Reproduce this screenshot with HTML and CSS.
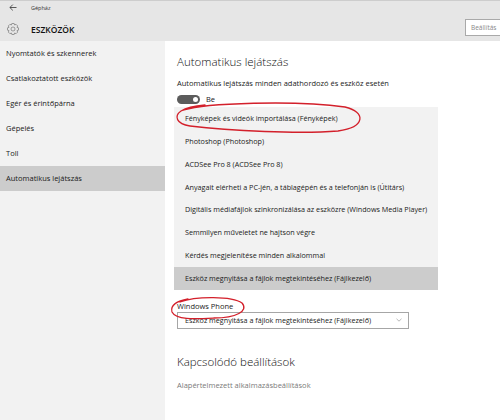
FILE: index.html
```html
<!DOCTYPE html>
<html lang="hu">
<head>
    <meta charset="UTF-8">
    <title>Gépház</title>
    <link rel="stylesheet" href="styles.css">
</head>
<body>
    <div class="window">
        <div class="header">
            <div class="header-left">
                <div class="titlebar">
                    <svg class="back" width="8" height="7" viewBox="0 0 8 7"><path d="M7.5 3.5H1M3.8 0.6L0.9 3.5L3.8 6.4" fill="none" stroke="#333" stroke-width="0.8"/></svg>
                    <span class="apptitle">Gépház</span>
                </div>
                <div class="pagebar">
                    <svg class="gear" width="12" height="12" viewBox="0 0 12 12"><polygon points="9.97,4.35 11.48,4.84 11.48,7.16 9.97,7.65 10.70,9.05 9.05,10.70 7.65,9.97 7.16,11.48 4.84,11.48 4.35,9.97 2.95,10.70 1.30,9.05 2.03,7.65 0.52,7.16 0.52,4.84 2.03,4.35 1.30,2.95 2.95,1.30 4.35,2.03 4.84,0.52 7.16,0.52 7.65,2.03 9.05,1.30 10.70,2.95" fill="none" stroke="#666" stroke-width="0.6"/><circle cx="6" cy="6" r="2" fill="none" stroke="#666" stroke-width="0.6"/></svg>
                    <span class="pagetitle">ESZKÖZÖK</span>
                </div>
            </div>
            <div class="search">Beállítás</div>
        </div>

        <div class="main">
            <div class="sidebar">
                <div class="nav-item">Nyomtatók és szkennerek</div>
                <div class="nav-item">Csatlakoztatott eszközök</div>
                <div class="nav-item">Egér és érintőpárna</div>
                <div class="nav-item">Gépelés</div>
                <div class="nav-item">Toll</div>
                <div class="nav-item active">Automatikus lejátszás</div>
            </div>

            <div class="content">
                <h1>Automatikus lejátszás</h1>
                <div class="text">Automatikus lejátszás minden adathordozó és eszköz esetén</div>
                <div class="toggle-row">
                    <span class="toggle"><span class="knob"></span></span>
                    <span class="text">Be</span>
                </div>
                <div class="options">
                    <div class="option">Fényképek és videók importálása (Fényképek)</div>
                    <div class="option">Photoshop (Photoshop)</div>
                    <div class="option">ACDSee Pro 8 (ACDSee Pro 8)</div>
                    <div class="option">Anyagait elérheti a PC-jén, a táblagépén és a telefonján is (Útitárs)</div>
                    <div class="option">Digitális médiafájlok szinkronizálása az eszközre (Windows Media Player)</div>
                    <div class="option">Semmilyen műveletet ne hajtson végre</div>
                    <div class="option">Kérdés megjelenítése minden alkalommal</div>
                    <div class="option selected">Eszköz megnyitása a fájlok megtekintéséhez (Fájlkezelő)</div>
                </div>
                <div class="text device">Windows Phone</div>
                <div class="select">
                    <span>Eszköz megnyitása a fájlok megtekintéséhez (Fájlkezelő)</span>
                    <svg width="6" height="4" viewBox="0 0 6 4"><path d="M0.5 0.8L3 3.2L5.5 0.8" fill="none" stroke="#999" stroke-width="0.7"/></svg>
                </div>
                <h2>Kapcsolódó beállítások</h2>
                <div class="text link">Alapértelmezett alkalmazásbeállítások</div>
            </div>
        </div>

        <!-- red pen marks on the screenshot -->
        <svg class="marks" width="500" height="420" viewBox="0 0 500 420">
            <path d="M184 110 C205 103 295 100 345 107 C366 112 366 127 338 131 C300 134 230 131 190 126 C176 124 174 116 181 111 C186 108 195 106 205 105" />
            <path d="M180 302 C196 296 232 296 242 303 C249 311 236 318 214 318 C194 319 176 320 172 312 C170 305 177 301 188 299" />
        </svg>
    </div>
</body>
</html>
```

FILE: styles.css
```css
body {margin: 0; font-family: "Open Sans", "Noto Sans", sans-serif; color: #1a1a1a;}
.window {width: 500px; height: 420px; overflow: hidden; position: relative; background: #ffffff;}

/* header */
.header {height: 40px; background: #e6e6e6; border-top: 1px solid #cdcdcd; display: flex; justify-content: space-between;}
.titlebar {display: flex; align-items: center; height: 13px; padding-left: 9px; gap: 14px;}
.apptitle {font-size: 5.5px; color: #333;}
.pagebar {display: flex; align-items: center; height: 30px; padding-left: 7px; gap: 12px;}
.pagetitle {font-size: 8.5px; font-weight: 600; color: #111;}
.search {margin-top: 18px; height: 15px; width: 80px; flex: none; margin-right: -52px; background: #fff; border: 1px solid #a9a9a9; font-size: 6.5px; color: #888; line-height: 15px; padding-left: 5px; white-space: nowrap;}

/* layout */
.main {display: flex; height: 379px;}
.sidebar {width: 165px; flex: none; background: #f2f2f2;}
.nav-item {height: 25px; line-height: 25px; padding-left: 6px; font-size: 7.5px;}
.nav-item.active {background: #cccccc;}

.content {flex: 1; padding-left: 12px; display: flex; flex-direction: column; align-items: flex-start;}
h1, h2 {font-size: 11.5px; font-weight: 300; line-height: 16px; margin: 0; color: #111;}
h1 {margin-top: 13px;}
.text {font-size: 7.5px; line-height: 12px;}
.content > .text:first-of-type {margin-top: 7px;}

.toggle-row {display: flex; align-items: center; gap: 6px; height: 12px; margin-top: 4px;}
.toggle {width: 23px; height: 9px; border-radius: 5px; background: #5c5c5c; display: flex; justify-content: flex-end; align-items: center; padding-right: 2px; box-sizing: border-box;}
.knob {width: 5px; height: 5px; border-radius: 50%; background: #fff;}

.options {margin-top: 2px; margin-left: -3px; width: 264px; background: #f2f2f2;}
.option {height: 22.85px; line-height: 22.85px; padding-left: 11px; font-size: 7.2px; white-space: nowrap;}
.option.selected {background: #cccccc;}

.device {margin-top: 10px;}
.select {width: 232px; height: 17px; border: 1px solid #a6a6a6; display: flex; align-items: center; justify-content: space-between; padding: 0 6px 0 7px; box-sizing: border-box; font-size: 7.2px;}

h2 {margin-top: 25px;}
.link {margin-top: 9px; color: #7a7a7a;}

.marks {position: absolute; top: 0; left: 0; pointer-events: none;}
.marks path {fill: none; stroke: #d3202b; stroke-width: 1.3; stroke-linecap: round;}
```
